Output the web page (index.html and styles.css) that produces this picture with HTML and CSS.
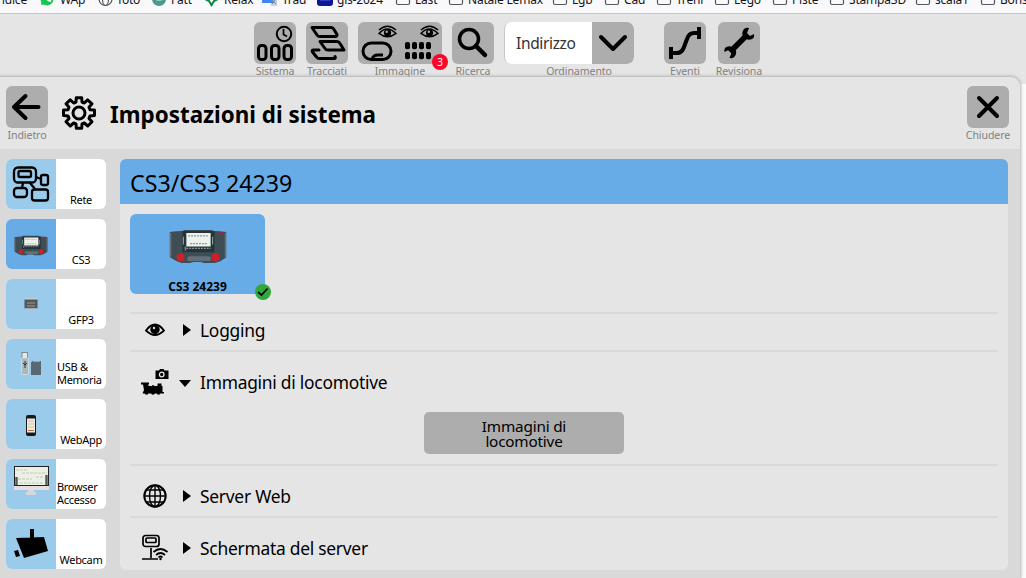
FILE: index.html
```
<!DOCTYPE html>
<html lang="it">
<head>
<meta charset="utf-8">
<title>Impostazioni di sistema</title>
<link rel="stylesheet" href="styles.css">
</head>
<body>
<svg class="defs" width="0" height="0">
  <defs>
    <symbol id="folder" viewBox="0 0 16 16"><path d="M1.500 3.500q0-2 2-2h3l2 2h4q2 0 2 2v6.500q0 1.500-1.500 1.500h-10q-1.500 0-1.500-1.500z" fill="none" stroke="#55555d" stroke-width="1.200"/></symbol>
    <symbol id="eye" viewBox="0 0 20 14"><path d="M1 8.500Q9.500-1 19 8.500Q10 15.500 1 8.500z" fill="none" stroke="#000" stroke-width="1.500"/><circle cx="10" cy="7.800" r="3.800"/><circle cx="9.200" cy="6.800" r="1.300" fill="#aaa"/><path d="M1 5Q10-3 19 5" fill="none" stroke="#000" stroke-width="1.400"/></symbol>
    <symbol id="station" viewBox="0 0 60 36">
      <path d="M1 3Q8 2 14 2l2-1h28l2 1q7 0 13 1v26q-6 5-12 6H36l-3-1h-8l-3 1H13Q7 33 1 29z" fill="#3f4d55"/>
      <path d="M1 4v24l1.500 1V4zM59 4v24l-1.500 1V4z" fill="#65747c"/>
      <path d="M14 2h33v22H14z" fill="#26343a"/><path d="M18 4h25v14H18z" fill="#eef2ee"/><path d="M20 7h20M22 15h17M18 20h25" stroke="#879793" stroke-width="1.200" stroke-dasharray="2 1"/>
      <path d="M17 18v4M15 8v8M45 8v8" stroke="#7da38b" stroke-width="1.200"/><rect x="19" y="28" width="24" height="5" rx="2" fill="#627078"/>
      <circle cx="12" cy="29" r="4" fill="#cf2029"/><circle cx="48" cy="29" r="4" fill="#cf2029"/><path d="M50 4.500h7" stroke="#a22635" stroke-width="2"/>
    </symbol>
  </defs>
</svg>
<nav class="bookmarks">
  <div class="mark first"><span>Indice</span></div>
  <div class="mark"><svg viewBox="0 0 16 16"><circle cx="7" cy="8" r="6.500" fill="#19c653"/><path d="M1 14l1-5 4 4z" fill="#19c653"/><path d="M4.500 5q1 5 6 6l1-2-2-1-1 1-2-2 1-1-1-2z" fill="#fff"/></svg><span>WAp</span></div>
  <div class="mark"><svg viewBox="0 0 16 16"><g fill="none" stroke="#555" stroke-width="1.200"><circle cx="7.500" cy="8" r="6.500"/><ellipse cx="7.500" cy="8" rx="3" ry="6.500"/><path d="M1 8h13"/></g></svg><span>foto</span></div>
  <div class="mark"><svg viewBox="0 0 16 16"><circle cx="8" cy="8" r="7" fill="#4b988c"/><path d="M5 10l3-5 3 5z" fill="#93c9b9"/></svg><span>Fatt</span></div>
  <div class="mark"><svg viewBox="0 0 16 16"><path d="M1 8l4-4h5l4 4-4 2-2.500 4L5 10z" fill="#fff" stroke="#07883c" stroke-width="2"/></svg><span>Relax</span></div>
  <div class="mark"><svg viewBox="0 0 16 16"><path d="M8 5h7v10H9z" fill="#ccd0d5"/><path d="M0 1h9l3 11H0z" fill="#4285f4"/><path d="M10 13l3-4M10 9l4 4" stroke="#6b87a8"/></svg><span>Trad</span></div>
  <div class="mark"><svg viewBox="0 0 16 16"><rect width="16" height="15" rx="3" fill="#0a169b"/><path d="M3 8.500h10" stroke="#b9bdf0" stroke-width="1.500"/></svg><span>gis-2024</span></div>
  <div class="mark"><svg><use href="#folder"/></svg><span>Last</span></div>
  <div class="mark"><svg><use href="#folder"/></svg><span>Natale Lemax</span></div>
  <div class="mark"><svg><use href="#folder"/></svg><span>Lgb</span></div>
  <div class="mark"><svg><use href="#folder"/></svg><span>Cad</span></div>
  <div class="mark"><svg><use href="#folder"/></svg><span>Treni</span></div>
  <div class="mark"><svg><use href="#folder"/></svg><span>Lego</span></div>
  <div class="mark"><svg><use href="#folder"/></svg><span>Piste</span></div>
  <div class="mark"><svg><use href="#folder"/></svg><span>Stampa3D</span></div>
  <div class="mark"><svg><use href="#folder"/></svg><span>scala1</span></div>
  <div class="mark"><svg><use href="#folder"/></svg><span>Bonsai</span></div>
</nav>
<header class="toolbar">
  <div class="tool"><button class="key"><svg viewBox="0 0 42 42"><g fill="none" stroke="#000" stroke-width="3"><rect x="4.500" y="23.500" width="7.500" height="14" rx="3"/><rect x="17.500" y="23.500" width="7.500" height="14" rx="3"/><rect x="30" y="23.500" width="7.500" height="14" rx="3"/><circle cx="30" cy="12" r="7.200" stroke-width="2"/><path d="M29.500 7v5.500l3.500 2" stroke-width="1.700"/></g></svg></button><span>Sistema</span></div>
  <div class="tool"><button class="key"><svg viewBox="0 0 42 42"><g fill="none" stroke="#000" stroke-width="3" stroke-linejoin="round" stroke-linecap="round"><path d="M6 5.500h19q2 0 3 2l3 5q0 2-2 2H14q-2 0-3-1.500z"/><path d="M14 19.500h17q2 0 3 2l4 6.500H22q-2 0-3-1.500z"/><path d="M13 28H7.500q-2 0-1 2l4 5q1 1.500 3 1.500h14.500q2 0 1-2"/></g></svg></button><span>Tracciati</span></div>
  <div class="tool image-tool"><div class="key wide"><svg viewBox="0 0 84 42"><g fill="none" stroke="#000" stroke-width="3"><rect x="5" y="21" width="28" height="16.500" rx="8.250"/><path d="M14 37.500q1-4.500 6-4.500h5"/></g><use href="#eye" x="20" y="3" width="19" height="14"/><use href="#eye" x="62" y="3" width="19" height="14"/><g><rect x="47" y="20" width="5" height="7.200" rx="2"/><rect x="54" y="20" width="5" height="7.200" rx="2"/><rect x="61" y="20" width="5" height="7.200" rx="2"/><rect x="68" y="20" width="5" height="7.200" rx="2"/><rect x="47" y="30" width="5" height="7.200" rx="2"/><rect x="54" y="30" width="5" height="7.200" rx="2"/><rect x="61" y="30" width="5" height="7.200" rx="2"/><rect x="68" y="30" width="5" height="7.200" rx="2"/></g></svg><b class="badge">3</b></div><span>Immagine</span></div>
  <div class="tool"><button class="key"><svg viewBox="0 0 42 42"><circle cx="17" cy="17" r="9.500" fill="none" stroke="#000" stroke-width="3.500"/><path d="M24 24l9 9" stroke="#000" stroke-width="4.500" stroke-linecap="round"/></svg></button><span>Ricerca</span></div>
  <div class="tool order"><div class="select"><span class="value">Indirizzo</span><div class="key"><svg viewBox="0 0 42 42"><path d="M9 15l12 12 12-12" fill="none" stroke="#000" stroke-width="4" stroke-linecap="round" stroke-linejoin="round"/></svg></div></div><span>Ordinamento</span></div>
  <div class="tool"><button class="key"><svg viewBox="0 0 42 42"><path d="M7 25v12M7 31h6q5 0 7-6l3-8q2-6 7-6h5M35 5v12" fill="none" stroke="#000" stroke-width="4"/></svg></button><span>Eventi</span></div>
  <div class="tool last"><button class="key"><svg viewBox="0 0 42 42"><path d="M12 30L29 13" stroke="#000" stroke-width="5.500"/><path d="M31 6q-5-1-6.500 4-1 5 3 7 5 2 8-1 1-2 .5-4l-4 2-3-3z"/><path d="M11.500 36q5 1 6.500-4 1-5-3-7-5-2-8 1-1 2-.5 4l4-2 3 3z"/></svg></button><span>Revisiona</span></div>
</header>
<main class="panel">
  <div class="panel-head">
    <div class="tool"><button class="key"><svg viewBox="0 0 42 42"><path d="M32.500 21H8M19.500 10L8 21l11.500 11" fill="none" stroke="#000" stroke-width="4" stroke-linecap="round" stroke-linejoin="round"/></svg></button><span>Indietro</span></div>
    <svg class="gear" viewBox="0 0 34 34"><g fill="none" stroke="#000" stroke-width="3" stroke-linejoin="round"><circle cx="17" cy="17" r="6"/><path d="M14 6l.3-4.300h5.400L20 6l2.300 1 3.300-3.200 4.400 4-3 3.400 1 2.500 4.500.3v5.500l-4.500.4-1 2.500 3 3.400-4.200 4.200-3.500-3-2.300 1-.3 4.300h-5.400L14 28l-2.300-1-3.500 3L4 25.800l3-3.400-1-2.500-4.500-.4V14l4.500-.3 1-2.500-3-3.400 4.200-4L11.700 7z"/></g></svg>
    <h1>Impostazioni di sistema</h1>
    <div class="tool close"><button class="key"><svg viewBox="0 0 42 42"><path d="M12 12l18 18M30 12L12 30" stroke="#000" stroke-width="4" stroke-linecap="round"/></svg></button><span>Chiudere</span></div>
  </div>
  <div class="panel-body">
    <aside class="side">
      <div class="card"><svg viewBox="0 0 50 50"><g fill="none" stroke="#000" stroke-width="2.300"><rect x="8" y="8.500" width="22" height="15" rx="4"/><rect x="12.500" y="12" width="12.500" height="6" rx="1.500"/><rect x="35" y="16" width="7" height="10" rx="2"/><rect x="8" y="29" width="13" height="9" rx="3"/><rect x="26" y="30.500" width="16" height="11" rx="2.500"/><path d="M30 18l5 2M17 24l-1 5M24 24l5 6"/></g></svg><span>Rete</span></div>
      <div class="card active"><svg viewBox="0 0 50 50"><use href="#station" x="8" y="16" width="34" height="21"/></svg><span>CS3</span></div>
      <div class="card"><svg viewBox="0 0 50 50"><path d="M19 21v-2h12v2" fill="#cbd0cf"/><rect x="18.500" y="20.500" width="13" height="9" fill="#4f595e"/><path d="M21 24h8M21 27h8" stroke="#97a0a2"/><path d="M19 29.500h12" stroke="#b4aaa5"/></svg><span>GFP3</span></div>
      <div class="card two"><svg viewBox="0 0 50 50"><rect x="16" y="13.500" width="5.500" height="6" fill="#e4e8e7" stroke="#777" stroke-width=".8"/><rect x="15.500" y="19" width="7" height="16.500" rx="1" fill="#aab7bb" stroke="#e5e5e0" stroke-width=".7"/><path d="M19 22v7M17 24l2 2 2-2" stroke="#333" fill="none"/><path d="M26 22h9v14h-10V24z" fill="#586973"/><path d="M27 22.500h7" stroke="#98a4a8"/></svg><span>USB &amp;<br>Memoria</span></div>
      <div class="card"><svg viewBox="0 0 50 50"><rect x="20" y="16" width="10" height="21" rx="2" fill="#17191b"/><rect x="21" y="19.500" width="8" height="14" fill="#f1e9da"/><path d="M22 22h6M22 25h6M22 28h6" stroke="#b4ab9d" stroke-width=".6"/><path d="M22 31.500h6" stroke="#c06b3b"/></svg><span>WebApp</span></div>
      <div class="card two"><svg viewBox="0 0 50 50"><rect x="8" y="7" width="35" height="21" fill="#222"/><rect x="9" y="8" width="33" height="18" fill="#edf0e6"/><path d="M8 27h35v4H8z" fill="#e5dfe0"/><path d="M10 11h12M16 14h25M12 20h14M30 18h8M14 24h24" stroke="#c1cbb1" stroke-dasharray="3 1"/><path d="M10.500 18v8M40.500 16v10" stroke="#536055" stroke-width="2.500"/><path d="M22 31h6v2h2v3H20v-3h2z" fill="#d3dadc"/></svg><span>Browser<br>Accesso</span></div>
      <div class="card"><svg viewBox="0 0 50 50"><path d="M24 10h4v12h-4zM10 19l28-1 4 14-24 7zM8 32l4-1 2 6-4 1z"/></svg><span>Webcam</span></div>
    </aside>
    <section class="content">
      <h2>CS3/CS3 24239</h2>
      <div class="device-row"><div class="device"><svg viewBox="0 0 60 36"><use href="#station"/></svg><b>CS3 24239</b><i class="ok"><svg viewBox="0 0 16 16"><circle cx="8" cy="8" r="8" fill="#32a83a"/><path d="M3 8l3.500 3L12.500 4.500" fill="none" stroke="#000" stroke-width="1.700"/></svg></i></div></div>
      <div class="sections">
        <div class="row logging"><svg class="row-icon" viewBox="0 0 30 30"><path d="M6 15.500q9-12 18 0-9 9-18 0z" fill="none" stroke="#000" stroke-width="1.800"/><circle cx="15" cy="14.500" r="4.700"/><circle cx="14" cy="13" r="1.200" fill="#ddd"/></svg><i class="tri"></i><span>Logging</span></div>
        <div class="loco">
          <div class="row"><svg class="row-icon" viewBox="0 0 30 30"><path d="M15.500 3.500H19l1-1.500h3.500l1 1.500h4v8.500h-13z"/><circle cx="21.700" cy="7.500" r="2.300" stroke="#e5e5e5" stroke-width="1.300"/><path d="M1 15.500h8V17h-.5v2h3.500q.5-2 2.500 0h3v-2.500h4V19h1v6h1.500v1.500H2.500L4 23l-1-5.500H1z"/><circle cx="6.500" cy="25.800" r="1.900"/><circle cx="13" cy="25.800" r="1.900"/><circle cx="18.500" cy="25.800" r="1.900"/></svg><i class="tri down"></i><span>Immagini di locomotive</span></div>
          <button class="action">Immagini di locomotive</button>
        </div>
        <div class="row web"><svg class="row-icon" viewBox="0 0 30 30"><g fill="none" stroke="#000" stroke-width="1.400"><circle cx="15" cy="15" r="10.700" stroke-width="2"/><ellipse cx="15" cy="15" rx="5.500" ry="10.700"/><path d="M15 4v22M4 15h22M6 9h18M6 21h18"/></g></svg><i class="tri"></i><span>Server Web</span></div>
        <div class="row screen"><svg class="row-icon" viewBox="0 0 30 30"><g fill="none" stroke="#000" stroke-width="1.700"><rect x="3" y="2.500" width="16" height="11" rx="2.500"/><rect x="6" y="5" width="10" height="4.500" rx="1"/><path d="M11 15v10M2 26h16M13.500 19q7-6 14 0M16 22q4.500-4 9 0M18.500 24.500q2-2 4 0"/></g><circle cx="20.500" cy="26" r="1.200"/></svg><i class="tri"></i><span>Schermata del server</span></div>
      </div>
    </section>
  </div>
</main>
</body>
</html>
```
FILE: styles.css
```
* { box-sizing: border-box; }
body { margin: 0; height: 578px; overflow: hidden; background: #fafafa; font-family: "Noto Sans", sans-serif; color: #000; display: flex; flex-direction: column; }
.defs { display: none; }
button { border: 0; padding: 0; font: inherit; color: #000; }
svg { display: block; }
.bookmarks { height: 14px; flex: none; background: #f9f9fb; border-bottom: 1px solid #c6c6c8; display: grid; grid-template-columns: 40px 58px 53px 53px 58px 55px 78px 53px 104px 52px 52px 58px 58px 57px 86px 65px 60px; overflow: hidden; }
.mark { display: flex; gap: 4px; height: 16px; margin-top: -9px; font-size: 12px; line-height: 18px; white-space: nowrap; color: #15141a; letter-spacing: -.2px; }
.mark svg { width: 16px; height: 16px; flex: none; }
.mark.first { justify-content: flex-end; padding-right: 13px; }
.toolbar { height: 70px; flex: none; background: #e5e5e5; padding: 8px 0 0 254px; display: flex; gap: 10px; align-items: flex-start; }
.tool { width: 42px; display: flex; flex-direction: column; align-items: center; font-size: 10.600px; line-height: 14px; color: #808080; white-space: nowrap; letter-spacing: -.1px; }
.key { width: 42px; height: 42px; flex: none; background: #adadad; border-radius: 6px; color: #000; }
.key svg { width: 100%; height: 42px; }
.image-tool { width: 84px; }
.wide { width: 84px; position: relative; }
.badge { position: absolute; right: -6px; bottom: -6px; width: 16px; height: 16px; border-radius: 50%; background: #f80729; color: #fff; font-size: 10px; font-weight: 400; line-height: 16px; text-align: center; }
.order { width: 130px; margin-right: 20px; }
.order > span { padding-left: 20px; }
.select { width: 130px; height: 42px; border-radius: 7px; background: #fff; display: flex; align-items: center; overflow: hidden; border-left: 1px solid #c7c7c7; }
.value { flex: 1; padding: 0 0 0 11px; font-size: 15.500px; line-height: 22px; color: #333; letter-spacing: -.35px; }
.select .key { border-radius: 0 6px 6px 0; }
.last { margin-left: 2px; }
.panel { width: 1020px; flex: 1; min-height: 0; margin-top: -7px; background: #d9d9d9; border-radius: 0 9px 0 0; box-shadow: 0 0 3px 1px #b0b0b0; overflow: hidden; position: relative; }
.panel-head { height: 72px; background: #e5e5e5; padding: 9px 11px 0 6px; display: flex; align-items: flex-start; }
.gear { width: 34px; height: 34px; margin: 10px 0 0 14px; }
h1 { margin: 12px 0 0 14px; font-size: 22.400px; line-height: 34px; font-weight: 700; white-space: nowrap; }
.close { margin-left: auto; }
.panel-body { display: flex; gap: 14px; padding: 10px 12px 8px 6px; }
.side { width: 100px; flex: none; display: flex; flex-direction: column; gap: 10px; }
.card { height: 50px; border-radius: 6px; overflow: hidden; background: #fff; display: flex; font-size: 11px; line-height: 13px; letter-spacing: -.3px; }
.card > svg { width: 50px; height: 50px; background: #9bcbeb; flex: none; }
.card.active > svg { background: #68ace7; }
.card > span { flex: 1; align-self: flex-end; padding-bottom: 3px; text-align: center; white-space: nowrap; }
.card.two > span { text-align: left; padding-left: 1px; }
.content { width: 888px; height: 411px; background: #e5e5e5; border-radius: 6px; overflow: hidden; }
h2 { margin: 0; height: 45px; padding: 3px 10px 0; background: #68ace7; font-size: 23.200px; line-height: 43px; font-weight: 400; }
.device-row { padding: 10px 10px 0; height: 108px; }
.device { position: relative; width: 135px; height: 80px; border-radius: 6px; background: #68ace7; display: flex; flex-direction: column; align-items: center; padding-top: 15px; font-size: 12px; line-height: 14px; }
.device > svg { width: 60px; height: 36px; }
.device b { margin-top: 16px; }
.ok { position: absolute; right: -6px; bottom: -6px; width: 16px; height: 16px; }
.sections { padding: 0 10px; }
.row { display: flex; align-items: center; font-size: 17.400px; letter-spacing: -.25px; line-height: 24px; white-space: nowrap; padding-left: 10px; }
.row-icon { width: 30px; height: 30px; flex: none; }
.tri { margin: 0 9px 0 13px; border-left: 8px solid #000; border-top: 6px solid transparent; border-bottom: 6px solid transparent; }
.tri.down { margin: 3px 9px 0; border-top: 7px solid #000; border-bottom: 0; border-left: 6px solid transparent; border-right: 6px solid transparent; }
.logging, .loco, .web, .screen { border-top: 2px solid #d9d9d9; }
.logging { height: 38px; padding-bottom: 4px; }
.loco { height: 114px; padding-top: 15px; }
.action { display: block; width: 200px; height: 42px; margin: 15px 0 0 294px; padding: 2px 50px 0; border-radius: 5px; background: #adadad; font-size: 15.300px; line-height: 15px; letter-spacing: -.2px; text-align: center; }
.web { height: 52px; padding-top: 10px; }
.screen { height: 54px; padding-top: 8px; }
```
